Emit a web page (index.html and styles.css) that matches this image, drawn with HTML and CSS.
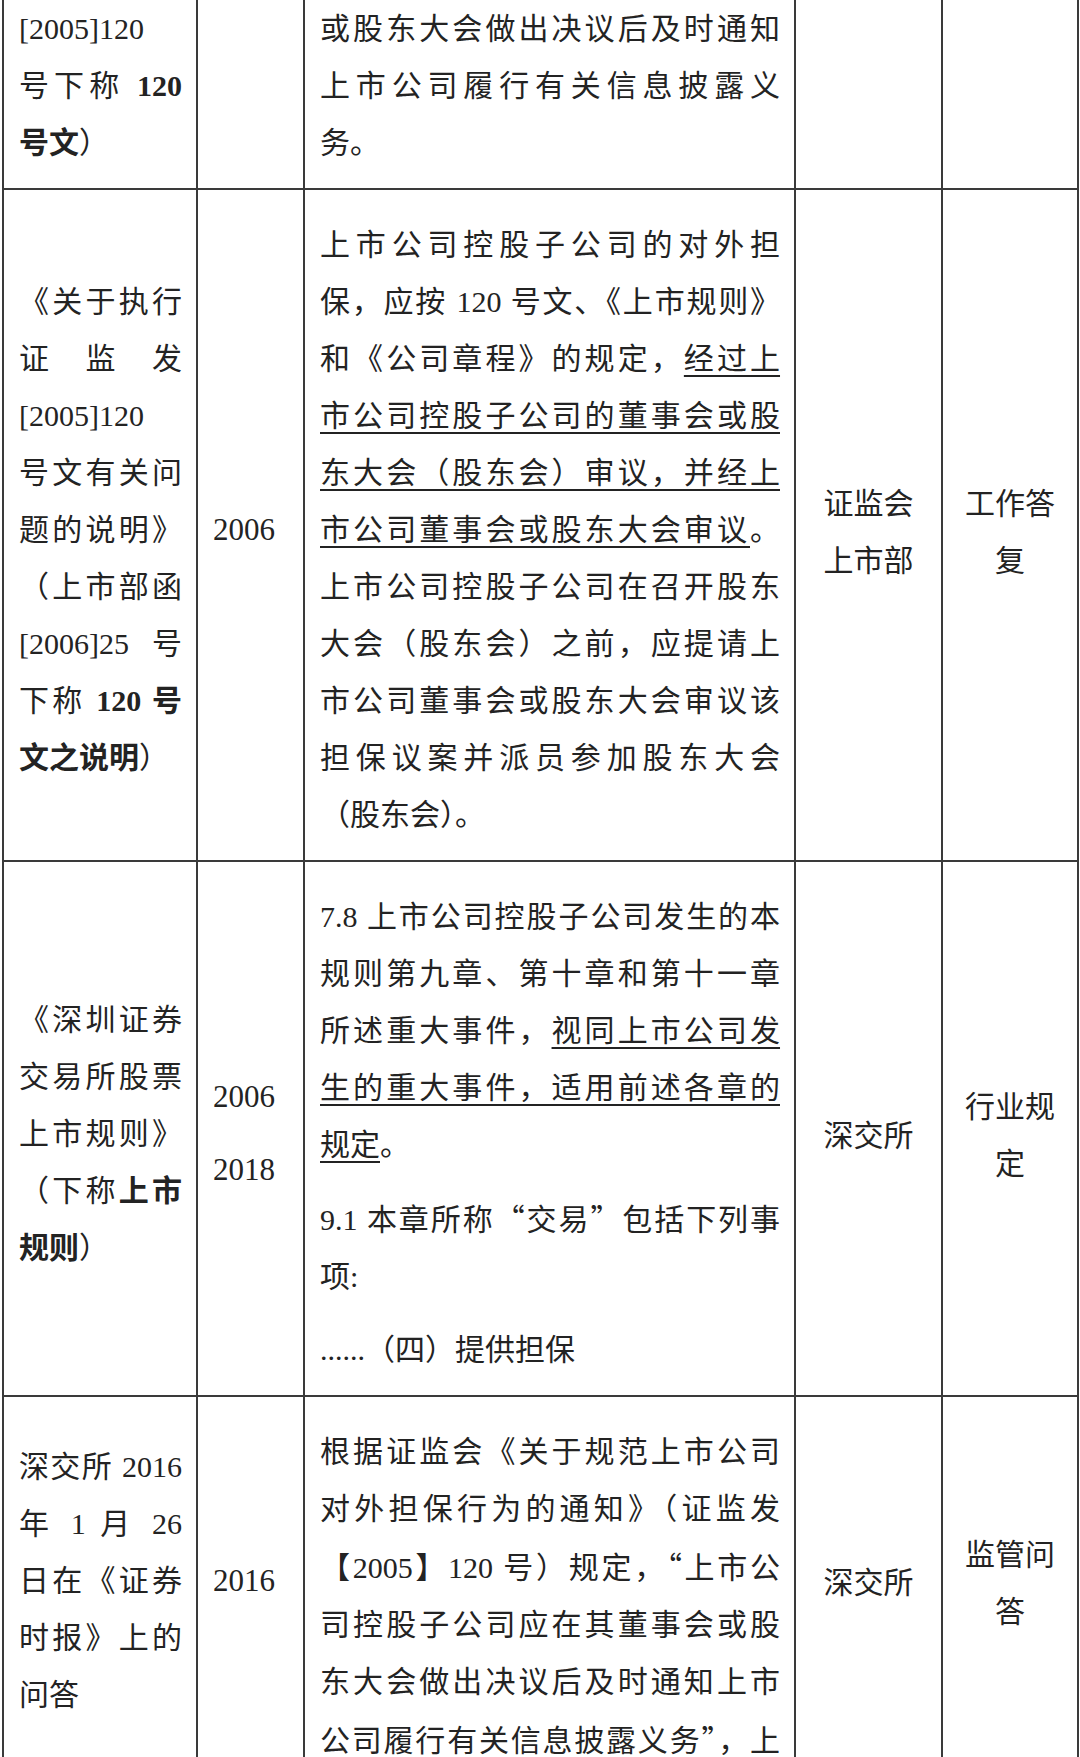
FILE: index.html
```html
<!DOCTYPE html>
<html lang="zh-CN">
<head>
<meta charset="utf-8">
<title>控股子公司对外担保规定</title>
<link rel="stylesheet" href="styles.css">
</head>
<body>
<table class="rules">
  <colgroup>
    <col class="c-name">
    <col class="c-year">
    <col class="c-text">
    <col class="c-org">
    <col class="c-type">
  </colgroup>
  <tbody>
    <tr class="first">
      <td class="name">
        <span class="l e">[2005]120</span>
        <span class="l">号下称 <b>120</b></span>
        <span class="l e"><b>号文</b>）</span>
      </td>
      <td class="year"></td>
      <td class="text">
        <p>
          <span class="l">或股东大会做出决议后及时通知</span>
          <span class="l">上市公司履行有关信息披露义</span>
          <span class="l e">务。</span>
        </p>
      </td>
      <td class="org"></td>
      <td class="type"></td>
    </tr>
    <tr>
      <td class="name">
        <span class="l">《关于执行</span>
        <span class="l">证监发</span>
        <span class="l e">[2005]120</span>
        <span class="l">号文有关问</span>
        <span class="l">题的说明》</span>
        <span class="l">（上市部函</span>
        <span class="l">[2006]25 号</span>
        <span class="l">下称 <b>120 号</b></span>
        <span class="l e"><b>文之说明</b>）</span>
      </td>
      <td class="year"><p>2006</p></td>
      <td class="text">
        <p>
          <span class="l">上市公司控股子公司的对外担</span>
          <span class="l">保，应按 120 号文、《上市规则》</span>
          <span class="l">和《公司章程》的规定，<u>经过上</u></span>
          <span class="l"><u>市公司控股子公司的董事会或股</u></span>
          <span class="l"><u>东大会（股东会）审议，并经上</u></span>
          <span class="l"><u>市公司董事会或股东大会审议</u>。</span>
          <span class="l">上市公司控股子公司在召开股东</span>
          <span class="l">大会（股东会）之前，应提请上</span>
          <span class="l">市公司董事会或股东大会审议该</span>
          <span class="l">担保议案并派员参加股东大会</span>
          <span class="l e">（股东会）。</span>
        </p>
      </td>
      <td class="org">证监会<br>上市部</td>
      <td class="type">工作答<br>复</td>
    </tr>
    <tr>
      <td class="name">
        <span class="l">《深圳证券</span>
        <span class="l">交易所股票</span>
        <span class="l">上市规则》</span>
        <span class="l">（下称<b>上市</b></span>
        <span class="l e"><b>规则</b>）</span>
      </td>
      <td class="year"><p>2006</p><p>2018</p></td>
      <td class="text">
        <p>
          <span class="l">7.8 上市公司控股子公司发生的本</span>
          <span class="l">规则第九章、第十章和第十一章</span>
          <span class="l">所述重大事件，<u>视同上市公司发</u></span>
          <span class="l"><u>生的重大事件，适用前述各章的</u></span>
          <span class="l e"><u>规定</u>。</span>
        </p>
        <p>
          <span class="l">9.1 本章所称<span class="q">“</span>交易<span class="q">”</span>包括下列事</span>
          <span class="l e">项:</span>
        </p>
        <p>
          <span class="l e">......（四）提供担保</span>
        </p>
      </td>
      <td class="org">深交所</td>
      <td class="type">行业规<br>定</td>
    </tr>
    <tr class="last">
      <td class="name">
        <span class="l">深交所 2016</span>
        <span class="l">年 1 月 26</span>
        <span class="l">日在《证券</span>
        <span class="l">时报》上的</span>
        <span class="l e">问答</span>
      </td>
      <td class="year"><p>2016</p></td>
      <td class="text">
        <p>
          <span class="l">根据证监会《关于规范上市公司</span>
          <span class="l">对外担保行为的通知》（证监发</span>
          <span class="l">【2005】120 号）规定，<span class="q">“</span>上市公</span>
          <span class="l">司控股子公司应在其董事会或股</span>
          <span class="l">东大会做出决议后及时通知上市</span>
          <span class="l">公司履行有关信息披露义务<span class="q">”</span>，上</span>
        </p>
      </td>
      <td class="org">深交所</td>
      <td class="type">监管问<br>答</td>
    </tr>
  </tbody>
</table>
</body>
</html>
```

FILE: styles.css
```css
html, body {
  margin: 0;
  padding: 0;
  background: #ffffff;
}

body {
  font-family: "Liberation Serif", "Noto Sans CJK SC", serif;
  font-size: 30px;
  line-height: 57px;
  color: #232323;
}

.rules {
  border-collapse: collapse;
  table-layout: fixed;
  width: 1077px;
  margin-left: 2px;
}

.c-name { width: 194px; }
.c-year { width: 107px; }
.c-text { width: 491px; }
.c-org  { width: 147px; }
.c-type { width: 136px; }

.rules td {
  border: 2px solid #3a3a3a;
  padding: 26px 14px 17px 15px;
  vertical-align: middle;
  font-weight: 400;
}

.rules tr.first td {
  border-top: none;
  padding-top: 0;
}

.rules td.year {
  font-size: 31px;
}

.rules td.org,
.rules td.type {
  text-align: center;
  padding-left: 6px;
  padding-right: 6px;
  font-family: "Noto Sans CJK SC", sans-serif;
}

.rules tr.last td.name,
.rules tr.last td.year,
.rules tr.last td.org,
.rules tr.last td.type {
  padding-bottom: 48px;
}

.rules p {
  margin: 0;
}

.rules p + p {
  margin-top: 16px;
}

.l {
  display: block;
  text-align: justify;
  text-align-last: justify;
  white-space: nowrap;
}

.l.e {
  text-align-last: left;
}

b {
  font-weight: 700;
}

u {
  text-decoration: underline;
  text-decoration-thickness: 2px;
  text-underline-offset: 6px;
}

.q {
  font-family: "Noto Sans CJK SC", sans-serif;
}
```
